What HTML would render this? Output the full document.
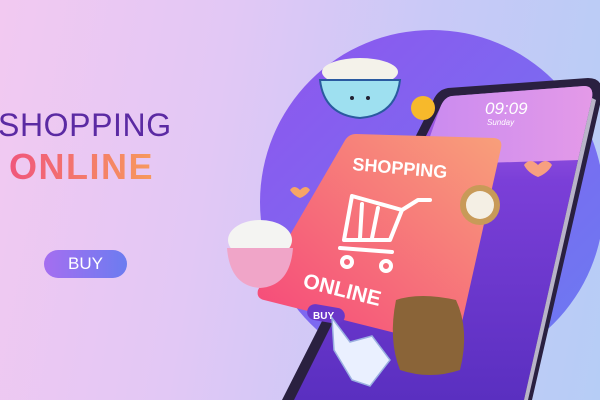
<!DOCTYPE html>
<html><head><meta charset="utf-8"><style>
html,body{margin:0;padding:0;width:600px;height:400px;overflow:hidden}
body{background:linear-gradient(100deg,#f2c9f1 0%,#e2c8f5 35%,#c9c9f7 65%,#b6cdf6 100%);font-family:"Liberation Sans",sans-serif;position:relative}
.t1{position:absolute;left:-2px;top:107px;font-size:32px;color:#5b2aa3;letter-spacing:0.6px}
.t2{position:absolute;left:9px;top:146px;font-size:36px;font-weight:bold;background:linear-gradient(90deg,#f0567c,#f79a5c);-webkit-background-clip:text;color:transparent;letter-spacing:1.5px}
.buy{position:absolute;left:44px;top:250px;width:83px;height:28px;border-radius:14px;background:linear-gradient(90deg,#a56ef0,#6c7cf0);color:#fff;font-size:17px;text-align:center;line-height:28px}
svg{position:absolute;left:0;top:0}
</style></head><body>
<div class="t1">SHOPPING</div>
<div class="t2">ONLINE</div>
<div class="buy">BUY</div>
<svg width="600" height="400" viewBox="0 0 600 400">
<defs>
<linearGradient id="circ" x1="0" y1="0" x2="1" y2="1"><stop offset="0" stop-color="#8f55ee"/><stop offset="1" stop-color="#6a7cf2"/></linearGradient>
<linearGradient id="scr" x1="0" y1="0" x2="0" y2="1"><stop offset="0" stop-color="#b06ae6"/><stop offset="0.3" stop-color="#7b3fd8"/><stop offset="1" stop-color="#5a2fc0"/></linearGradient>
<linearGradient id="card" x1="0" y1="1" x2="1" y2="0"><stop offset="0" stop-color="#f5447a"/><stop offset="1" stop-color="#f8a07a"/></linearGradient>
<linearGradient id="top" x1="0" y1="0" x2="1" y2="0"><stop offset="0" stop-color="#c98af0"/><stop offset="1" stop-color="#e49ae8"/></linearGradient>
</defs>
<circle cx="432" cy="202" r="172" fill="url(#circ)"/>
<path d="M448 88 L588 78 Q604 78 602 96 L532 400 L282 400 L432 104 Q436 90 448 88 Z" fill="#2a2040"/>
<path d="M452 96 L584 86 Q594 86 592 98 L524 400 L294 400 L440 108 Q444 97 452 96 Z" fill="url(#scr)"/>
<path d="M452 96 L584 86 Q594 86 592 98 L578 160 L420 165 L440 108 Q444 97 452 96 Z" fill="url(#top)"/>
<text x="485" y="114" font-size="17" font-style="italic" fill="#fff" font-family="Liberation Sans">09:09</text>
<text x="487" y="125" font-size="8" font-style="italic" fill="#fff" font-family="Liberation Sans">Sunday</text>
<path d="M592 98 L596 100 L528 400 L524 400 Z" fill="#b9b4c8"/>
<path d="M356 134 L494 138 Q503 139 501 148 L458 340 Q455 348 447 346 L264 300 Q256 298 258 290 L344 142 Q348 134 356 134 Z" fill="url(#card)"/>
<text x="352" y="170" font-size="18" font-weight="bold" fill="#fff" transform="rotate(5 352 170)" font-family="Liberation Sans">SHOPPING</text>
<text x="302" y="287" font-size="21" font-weight="bold" fill="#fff" transform="rotate(14 302 287)" font-family="Liberation Sans">ONLINE</text>
<g fill="none" stroke="#fff" stroke-width="4" stroke-linejoin="round" stroke-linecap="round">
<path d="M352 196 L402 210 L390 240 L344 240 Z"/>
<path d="M402 210 L418 200 L430 200"/>
<path d="M362 204 L360 238 M378 208 L372 238"/>
<path d="M340 248 L392 252"/>
<circle cx="347" cy="262" r="5"/><circle cx="386" cy="266" r="5"/>
</g>
<rect x="307" y="306" width="38" height="16" rx="8" fill="#6a37c8" transform="rotate(10 326 314)"/>
<text x="313" y="319" font-size="10" font-weight="bold" fill="#fff" font-family="Liberation Sans">BUY</text>
<path d="M332 318 L350 342 L372 336 L390 360 L370 386 L352 380 L334 350 Z" fill="#eaf0ff" stroke="#9bb0e0" stroke-width="1.5"/>
<ellipse cx="360" cy="72" rx="38" ry="14" fill="#f4f2ea"/>
<path d="M320 80 L400 80 Q396 115 360 118 Q324 115 320 80 Z" fill="#9ee0f0" stroke="#2a5aa0" stroke-width="2"/>
<circle cx="352" cy="98" r="2" fill="#223"/><circle cx="368" cy="98" r="2" fill="#223"/>
<circle cx="423" cy="108" r="12" fill="#f7b92b"/>
<ellipse cx="260" cy="240" rx="32" ry="20" fill="#f4f4f2"/>
<path d="M227 248 L293 248 Q290 286 260 288 Q230 286 227 248 Z" fill="#f0a5c8"/>
<circle cx="480" cy="205" r="20" fill="#c89a58"/>
<circle cx="480" cy="205" r="14" fill="#f4efe4"/>
<path d="M396 300 Q420 292 456 300 Q470 330 460 370 Q430 380 400 370 Q388 340 396 300 Z" fill="#8a6438"/>
<path d="M300 190 q-6 -6 -10 0 q4 6 10 8 q6 -2 10 -8 q-4 -6 -10 0Z" fill="#f7a566"/>
<path d="M538 165 q-8 -8 -14 0 q4 8 14 12 q10 -4 14 -12 q-6 -8 -14 0Z" fill="#f7a080"/>
</svg>
</body></html>
